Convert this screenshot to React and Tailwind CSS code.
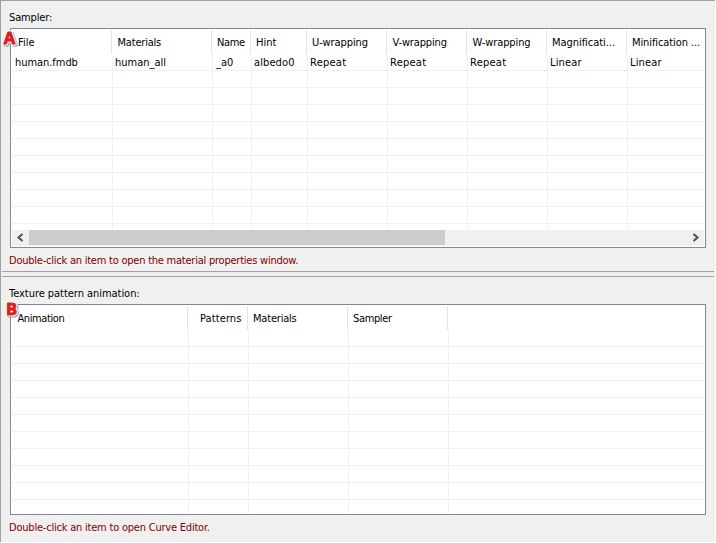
const samplerColumns = [
  { label: "File", value: "human.fmdb", head: "w-[100px] pl-[6px]", cell: "w-[101px] pl-[3px] tracking-[-0.05px]" },
  { label: "Materials", value: "human_all", head: "w-[100px] pl-[5.5px] tracking-[-0.2px]", cell: "w-[100px] pl-[2px]" },
  { label: "Name", value: "_a0", head: "w-[39px] pl-[5px] tracking-[-0.35px]", cell: "w-[39px] pl-[3px]" },
  { label: "Hint", value: "albedo0", head: "w-[56px] pl-[5px]", cell: "w-[56px] pl-[2px] tracking-[0.1px]" },
  { label: "U-wrapping", value: "Repeat", head: "w-[80px] pl-[5px] tracking-[-0.1px]", cell: "w-[80px] pl-[2px] tracking-[0.25px]" },
  { label: "V-wrapping", value: "Repeat", head: "w-[80px] pl-[5.5px] tracking-[-0.15px]", cell: "w-[80px] pl-[2px] tracking-[0.25px]" },
  { label: "W-wrapping", value: "Repeat", head: "w-[80px] pl-[5.5px] tracking-[-0.1px]", cell: "w-[80px] pl-[2px] tracking-[0.25px]" },
  { label: "Magnificati...", value: "Linear", head: "w-[80px] pl-[5px] tracking-[-0.05px]", cell: "w-[80px] pl-[2px] tracking-[0.15px]" },
  { label: "Minification ...", value: "Linear", head: "grow pl-[5px] tracking-[-0.1px]", cell: "grow pl-[2px] tracking-[0.15px]", last: true },
];

const animationColumns = [
  { label: "Animation", head: "w-[176px] pl-[5.5px] tracking-[-0.4px]", cell: "w-[177px]" },
  { label: "Patterns", head: "w-[60px] pl-[12px] tracking-[0.1px]", cell: "w-[60px]" },
  { label: "Materials", head: "w-[100px] pl-[5px] tracking-[-0.2px]", cell: "w-[100px]" },
  { label: "Sampler", head: "w-[100px] pl-[5px] tracking-[-0.35px]", cell: "w-[100px]" },
  { label: "", head: "grow", cell: "grow", last: true },
];

function HeaderRow({ columns }) {
  return (
    <div className="flex h-[24px] shrink-0">
      {columns.map((c) => (
        <div
          key={c.label}
          className={`shrink-0 whitespace-nowrap leading-[26px] ${c.last ? "" : "border-r border-[#e5e5e5]"} ${c.head}`}
        >
          {c.label}
        </div>
      ))}
    </div>
  );
}

function GridRow({ columns, filled }) {
  return (
    <div className="flex h-[17px] shrink-0 border-b border-[#f0f0f0]">
      {columns.map((c) => (
        <div
          key={c.label}
          className={`h-[17px] shrink-0 whitespace-nowrap leading-[18px] ${c.last ? "" : "border-r border-[#f0f0f0]"} ${c.cell}`}
        >
          {filled ? c.value : ""}
        </div>
      ))}
    </div>
  );
}

function Table({ columns, rows, filledRows, children, className }) {
  return (
    <div className={`relative ml-[9px] flex w-[696px] shrink-0 flex-col border border-[#828790] bg-white p-px ${className}`}>
      <HeaderRow columns={columns} />
      <div className="flex min-h-0 grow flex-col overflow-hidden">
        {Array.from({ length: rows }, (_, i) => (
          <GridRow key={i} columns={columns} filled={i < filledRows} />
        ))}
      </div>
      {children}
    </div>
  );
}

function Badge({ letter, className }) {
  return (
    <svg className={`absolute overflow-visible ${className}`} width="22" height="26" viewBox="0 -4 22 26">
      <g
        fontFamily="'Open Sans', 'Liberation Sans', sans-serif"
        fontSize="16.5"
        fontWeight="700"
        textAnchor="middle"
        strokeLinejoin="round"
      >
        <text x="10.5" y="17" fill="#5f8499" stroke="#5f8499" strokeWidth="3" opacity="0.8">{letter}</text>
        <text x="9.5" y="16" fill="#ffffff" stroke="#ffffff" strokeWidth="3">{letter}</text>
        <text x="9.5" y="16" fill="#dc1f22" stroke="#dc1f22" strokeWidth="1">{letter}</text>
      </g>
    </svg>
  );
}

function ScrollBar() {
  return (
    <div className="mt-px flex h-[16px] shrink-0 bg-[#f0f0f0]">
      <svg className="w-[17px] shrink-0" height="16" viewBox="0 0 17 16">
        <path d="M10.5 4 L6.5 7.5 L10.5 11" fill="none" stroke="#505050" strokeWidth="2" />
      </svg>
      <div className="h-[15px] w-[416px] bg-[#cdcdcd]" />
      <div className="grow" />
      <svg className="w-[17px] shrink-0" height="16" viewBox="0 0 17 16">
        <path d="M6.5 4 L10.5 7.5 L6.5 11" fill="none" stroke="#505050" strokeWidth="2" />
      </svg>
    </div>
  );
}

export default function App() {
  return (
    <div className="h-[543px] w-[716px] overflow-hidden bg-white font-['DejaVu_Sans_Condensed','DejaVu_Sans',sans-serif] text-[11px] text-black">
      <div className="flex h-[542px] w-[715px] flex-col border-l border-t border-[#a0a0a0] bg-[#f0f0f0]">
        <div className="h-[27px] shrink-0 pl-[8px] pt-[9px] leading-[16px] tracking-[-0.15px]">Sampler:</div>
        <Table columns={samplerColumns} rows={11} filledRows={1} className="h-[220px]">
          <ScrollBar />
          <Badge letter="A" className="-left-[11px] -top-[5px]" />
        </Table>
        <div className="h-[23px] shrink-0 pl-[8px] pt-[5px] leading-[16px] tracking-[-0.23px] text-[#800000]">
          Double-click an item to open the material properties window.
        </div>
        <div className="ml-px mr-px h-[6px] shrink-0 border-y border-[#a0a0a0]" />
        <div className="h-[27px] shrink-0 pl-[8px] pt-[9px] leading-[16px] tracking-[-0.04px]">Texture pattern animation:</div>
        <Table columns={animationColumns} rows={11} filledRows={0} className="h-[211px]">
          <Badge letter="B" className="-left-[9px] -top-[10px]" />
        </Table>
        <div className="shrink-0 pl-[8px] pt-[5px] leading-[16px] tracking-[-0.21px] text-[#800000]">
          Double-click an item to open Curve Editor.
        </div>
      </div>
    </div>
  );
}
